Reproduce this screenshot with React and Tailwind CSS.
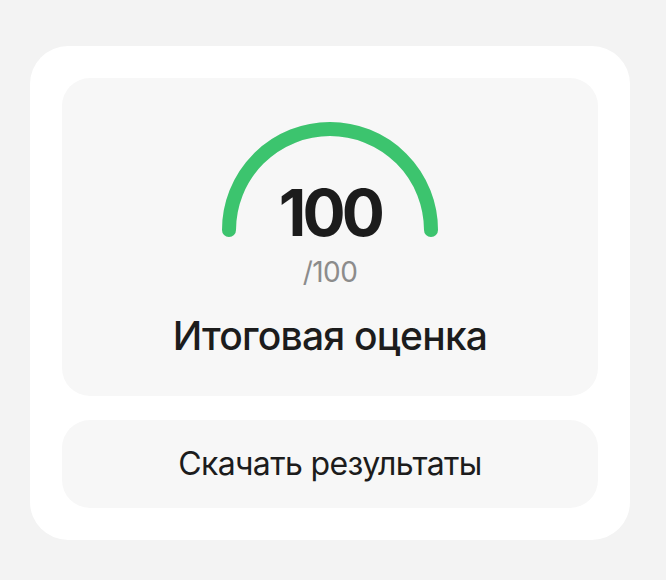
import React from 'react';

const Gauge = ({ value = 100, max = 100 }) => {
  const r = 101;
  const len = Math.PI * r;
  const filled = (value / max) * len;
  return (
    <div className="relative w-[216px] h-[115px]">
      <svg width="216" height="115" viewBox="0 0 216 115" className="block">
        <path d="M7 108 A101 101 0 0 1 209 108" fill="none" stroke="#ececec" strokeWidth="14" strokeLinecap="round" />
        <path
          d="M7 108 A101 101 0 0 1 209 108"
          fill="none"
          stroke="#3cc46e"
          strokeWidth="14"
          strokeLinecap="round"
          strokeDasharray={`${filled} ${len}`}
        />
      </svg>
      <div className="absolute inset-x-0 top-[59px] text-center text-[64px] leading-none font-bold tracking-[-0.06em] text-[#1c1c1c]">
        {value}
      </div>
    </div>
  );
};

const App = () => {
  return (
    <div className="min-h-[580px] bg-[#f3f3f3] pt-[46px] px-[30px] font-['Inter',sans-serif]">
      <div className="w-[600px] bg-white rounded-[38px] p-[32px] flex flex-col gap-[24px]">
        <div className="bg-[#f7f7f7] rounded-[28px] h-[318px] flex flex-col items-center pt-[44px]">
          <Gauge value={100} max={100} />
          <div className="mt-[21px] text-[28px] leading-none tracking-[-0.02em] text-[#8c8c8c]">/100</div>
          <div className="mt-[30px] text-[39px] leading-none font-medium tracking-[-0.02em] text-[#1c1c1c]">
            Итоговая оценка
          </div>
        </div>
        <button className="bg-[#f7f7f7] rounded-[28px] h-[88px] flex items-center justify-center text-[32px] text-[#1c1c1c] tracking-[-0.02em]">
          Скачать результаты
        </button>
      </div>
    </div>
  );
};

export default App;
